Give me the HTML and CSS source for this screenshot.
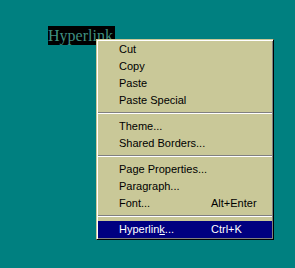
FILE: index.html
```html
<!DOCTYPE html>
<html lang="en">
<head>
  <meta charset="UTF-8">
  <title>Context menu</title>
  <link rel="stylesheet" href="styles.css">
</head>
<body>
  <div class="page">
    <span class="selected">Hyperlink</span>
  </div>

  <div class="menu">
    <div class="item"><span>Cut</span></div>
    <div class="item"><span>Copy</span></div>
    <div class="item"><span>Paste</span></div>
    <div class="item"><span>Paste Special</span></div>
    <div class="sep"></div>
    <div class="item"><span>Theme...</span></div>
    <div class="item"><span>Shared Borders...</span></div>
    <div class="sep"></div>
    <div class="item"><span>Page Properties...</span></div>
    <div class="item"><span>Paragraph...</span></div>
    <div class="item"><span>Font...</span><span>Alt+Enter</span></div>
    <div class="sep"></div>
    <div class="item active"><span>Hyperlin<u>k</u>...</span><span>Ctrl+K</span></div>
  </div>
</body>
</html>
```

FILE: styles.css
```css
body {
  margin: 0;
  background-color: #008080;
  width: 295px;
  height: 268px;
  overflow: hidden;
}
.page {
  padding: 26px 0 0 48px;
}
.selected {
  display: inline-block;
  background: #000;
  color: #3f8f80;
  font-family: "Liberation Serif", serif;
  font-size: 16px;
  line-height: 19px;
  padding: 0 2px 0 0;
}
.menu {
  position: absolute;
  left: 96px;
  top: 39px;
  width: 174px;
  padding: 1px;
  background: #c9c898;
  border: 1px solid;
  border-color: #c9c898 #000 #000 #c9c898;
  box-shadow: inset 1px 1px #fff, inset -1px -1px #808080;
  font-family: "Liberation Sans", Arial, sans-serif;
  font-size: 11px;
  color: #000;
}
.item {
  display: grid;
  grid-template-columns: 92px auto;
  height: 17px;
  line-height: 17px;
  padding-left: 21px;
}
.item.active {
  background: #000080;
  color: #fff;
}
.sep {
  height: 9px;
  position: relative;
}
.sep::before {
  content: "";
  position: absolute;
  left: 0;
  right: 0;
  top: 3px;
  border-top: 1px solid #808080;
  border-bottom: 1px solid #fff;
}
```
